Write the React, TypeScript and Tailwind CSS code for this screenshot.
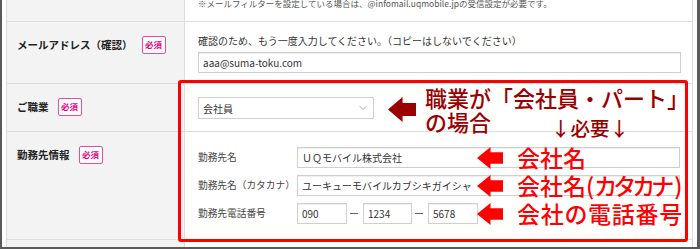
import React from 'react';
import { ChevronDown } from 'lucide-react';

const Required = () => (
  <span className="ml-[9px] flex h-[18px] w-[24px] shrink-0 items-center justify-center rounded-[2px] border border-[#ec4c9c] bg-white text-[8.5px] font-bold leading-none text-[#e4007f]">
    必須
  </span>
);

type RowProps = {
  label?: string;
  required?: boolean;
  height: string;
  children?: React.ReactNode;
};

const Row = ({ label, required, height, children }: RowProps) => (
  <div className={`flex border-b border-[#dddddd] ${height}`}>
    <div className="w-[178px] shrink-0 border-r border-[#dddddd] bg-[#f3f3f3] pl-[10px] pt-[13.5px]">
      {label && (
        <div className="flex items-center">
          <span className="whitespace-nowrap text-[10.5px] font-bold text-[#222]">{label}</span>
          {required && <Required />}
        </div>
      )}
    </div>
    <div className="min-w-0 flex-1 pl-[13px]">{children}</div>
  </div>
);

const Field = ({ value, className = '' }: { value: string; className?: string }) => (
  <div
    className={`flex h-[21px] items-center whitespace-nowrap border border-[#cfcfcf] bg-white px-[4px] text-[10px] text-[#333] shadow-[inset_0_1px_1px_rgba(0,0,0,0.07)] ${className}`}
  >
    {value}
  </div>
);

const Dash = () => <div className="ml-[3px] mr-[5px] h-[1.5px] w-[8px] shrink-0 bg-[#666]" />;

const SubLabel = ({ children }: { children: React.ReactNode }) => (
  <span className="w-[99px] shrink-0 whitespace-nowrap text-[9.7px] text-[#444]">{children}</span>
);

const LeftArrow = ({ w, h, color }: { w: number; h: number; color: string }) => {
  const mid = h / 2;
  const neck = w * 0.52;
  const t = h * 0.24;
  return (
    <svg width={w} height={h} viewBox={`0 0 ${w} ${h}`} className="shrink-0">
      <polygon
        points={`0,${mid} ${neck},0 ${neck},${t} ${w},${t} ${w},${h - t} ${neck},${h - t} ${neck},${h}`}
        fill={color}
      />
    </svg>
  );
};

export default function App() {
  return (
    <div className="relative h-[249px] w-[700px] overflow-hidden bg-white font-['Noto_Sans_CJK_JP',sans-serif]">
      <div className="h-full border-b-2 border-l-2 border-r-[3px] border-[#5a5a5a] px-[4px]">
        <div className="h-full overflow-hidden border-x border-[#dddddd]">
          <Row height="h-[22px]">
            <div className="-mt-[4px] whitespace-nowrap text-[8.5px] leading-[14px] text-[#555]">
              ※メールフィルターを設定している場合は、@infomail.uqmobile.jpの受信設定が必要です。
            </div>
          </Row>

          <Row label="メールアドレス（確認）" required height="h-[62px]">
            <div className="pr-[11px] pt-[12px]">
              <div className="whitespace-nowrap text-[10px] leading-[14px] text-[#333]">
                確認のため、もう一度入力してください。（コピーはしないでください）
              </div>
              <Field value="aaa@suma-toku.com" className="mt-[4px] w-full text-[10.5px]" />
            </div>
          </Row>

          <Row label="ご職業" required height="h-[48px]">
            <div className="pt-[13px]">
              <div className="flex h-[22px] w-[176px] items-center justify-between border border-[#cfcfcf] bg-white pl-[4px] pr-[4px] text-[10px] text-[#333]">
                <span>会社員</span>
                <ChevronDown size={12} strokeWidth={1.3} color="#777" />
              </div>
            </div>
          </Row>

          <Row label="勤務先情報" required height="h-[108px]">
            <div className="flex flex-col gap-[7px] pr-[12px] pt-[15px]">
              <div className="flex items-center">
                <SubLabel>勤務先名</SubLabel>
                <Field value="ＵＱモバイル株式会社" className="flex-1" />
              </div>
              <div className="flex items-center">
                <SubLabel>勤務先名（カタカナ）</SubLabel>
                <Field value="ユーキューモバイルカブシキガイシャ" className="flex-1" />
              </div>
              <div className="flex items-center">
                <SubLabel>勤務先電話番号</SubLabel>
                <Field value="090" className="w-[50px]" />
                <Dash />
                <Field value="1234" className="w-[49px]" />
                <Dash />
                <Field value="5678" className="w-[50px]" />
              </div>
            </div>
          </Row>

          <Row height="h-[20px]" />
        </div>
      </div>

      {/* highlight frame */}
      <div className="absolute left-[178px] top-[80px] h-[162px] w-[510px] rounded-[3px] border-[3px] border-[#ff0000]" />

      {/* occupation note */}
      <div className="absolute left-[388px] top-[97px]">
        <LeftArrow w={28} h={25} color="#9b0000" />
      </div>
      <div className="absolute left-[425px] top-[85px] whitespace-nowrap text-[22px] font-medium leading-[24px] text-[#9b0000]">
        <div>職業が「会社員・パート」</div>
        <div>の場合</div>
      </div>
      <div className="absolute left-[551px] top-[116px] whitespace-nowrap text-[19.5px] font-medium leading-[24px] text-[#9b0000]">
        ↓必要↓
      </div>

      {/* field notes */}
      <div className="absolute left-[477px] top-[147px] flex flex-col gap-[7px]">
        {[
          <>会社名</>,
          <>
            会社名(<span className="tracking-[-4px]">カタカ</span>ナ)
          </>,
          <span className="tracking-[0.7px]">会社の電話番号</span>,
        ].map((text, i) => (
          <div key={i} className="flex h-[21px] items-center">
            <LeftArrow w={26} h={22} color="#ff0000" />
            <span className="ml-[14px] whitespace-nowrap text-[23px] font-medium leading-none text-[#ff0000]">
              {text}
            </span>
          </div>
        ))}
      </div>
    </div>
  );
}
